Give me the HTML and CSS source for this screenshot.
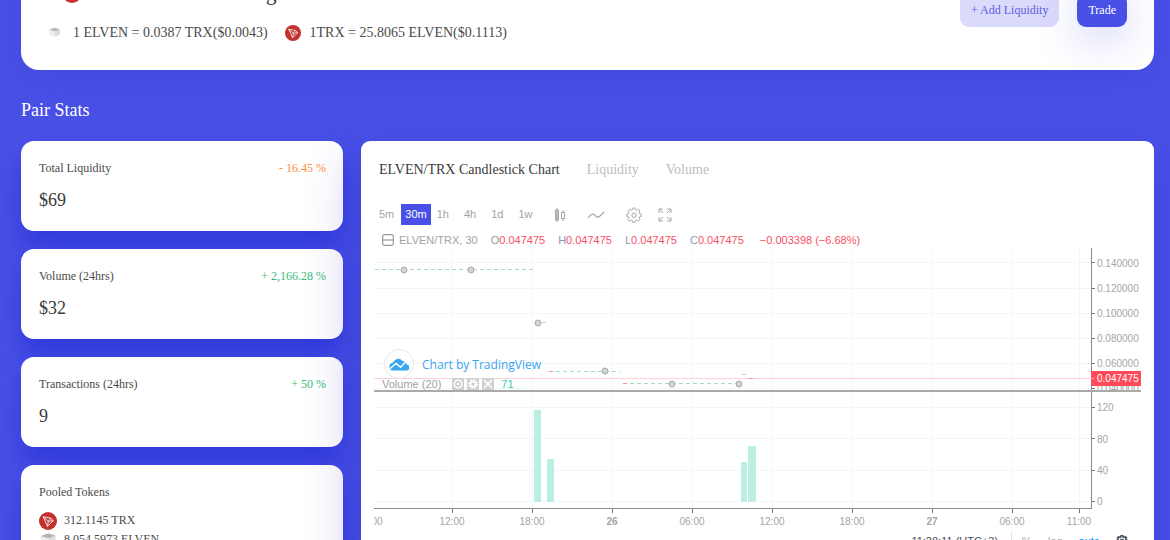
FILE: index.html
```html
<!DOCTYPE html>
<html lang="en">
<head>
<meta charset="utf-8">
<title>ELVEN/TRX Pair</title>
<link rel="stylesheet" href="styles.css">
</head>
<body>
<svg class="defs" aria-hidden="true">
  <symbol id="trx" viewBox="0 0 32 32">
    <circle cx="16" cy="16" r="16" fill="#c4302e"/>
    <path d="M7.5 8.5 21 11l4.500 4.300L15.200 25.500ZM7.500 8.500l9 8.200L15.200 25.500M21 11l-4.500 5.700 9-1.400" fill="none" stroke="#fff" stroke-width="1.500" stroke-linejoin="round"/>
  </symbol>
  <symbol id="elven" viewBox="0 0 24 24">
    <path d="M2 7 12 3l10 3-9 4Z" fill="#b5b5b5"/>
    <path d="M2 7l11 3v10L3 17Z" fill="#ececec"/>
    <path d="M13 10l9-4v9l-9 5Z" fill="#dcdcdc"/>
  </symbol>
  <symbol id="gear" viewBox="0 0 16 16">
    <path d="M6.800 1h2.400l.4 1.800 1.200.5 1.600-1 1.600 1.600-1 1.600.5 1.200 1.700.4v2.200l-1.700.4-.5 1.200 1 1.600-1.600 1.600-1.600-1-1.200.5-.4 1.700H6.800l-.4-1.700-1.200-.5-1.600 1L2 12.500l1-1.600-.5-1.200L.8 9.300V7.100l1.700-.4.5-1.200-1-1.600 1.600-1.600 1.600 1 1.200-.5Z"/>
    <circle cx="8" cy="8.200" r="2.200"/>
  </symbol>
</svg>

<main class="page">
  <header class="pair-card">
    <div class="pair-info">
      <div class="pair-title">
        <svg class="pair-coin"><use href="#elven"/></svg><svg class="pair-coin front"><use href="#trx"/></svg>
        <h1>ELVEN-TRX Trading</h1>
      </div>
      <div class="rates">
        <span class="rate"><svg class="cube"><use href="#elven"/></svg>1 ELVEN = 0.0387 TRX($0.0043)</span>
        <span class="rate"><svg class="coin"><use href="#trx"/></svg>1TRX = 25.8065 ELVEN($0.1113)</span>
      </div>
    </div>
    <div class="actions">
      <button class="btn btn-soft" type="button">+ Add Liquidity</button>
      <button class="btn btn-solid" type="button">Trade</button>
    </div>
  </header>

  <h2 class="section-title">Pair Stats</h2>

  <div class="columns">
    <div class="stats">
      <section class="stat">
        <div class="stat-head"><h3>Total Liquidity</h3><span class="down">- 16.45 %</span></div>
        <p class="value">$69</p>
      </section>
      <section class="stat">
        <div class="stat-head"><h3>Volume (24hrs)</h3><span class="up">+ 2,166.28 %</span></div>
        <p class="value">$32</p>
      </section>
      <section class="stat">
        <div class="stat-head"><h3>Transactions (24hrs)</h3><span class="up">+ 50 %</span></div>
        <p class="value">9</p>
      </section>
      <section class="stat">
        <div class="stat-head"><h3>Pooled Tokens</h3></div>
        <ul class="pool">
          <li><svg class="token"><use href="#trx"/></svg>312.1145 TRX</li>
          <li><svg class="token"><use href="#elven"/></svg>8,054.5973 ELVEN</li>
        </ul>
      </section>
    </div>

    <section class="chart-card">
      <nav class="tabs">
        <button class="tab active" type="button">ELVEN/TRX Candlestick Chart</button>
        <button class="tab" type="button">Liquidity</button>
        <button class="tab" type="button">Volume</button>
      </nav>

      <div class="toolbar">
        <div class="intervals">
          <button type="button">5m</button>
          <button type="button" class="active">30m</button>
          <button type="button">1h</button>
          <button type="button">4h</button>
          <button type="button">1d</button>
          <button type="button">1w</button>
        </div>
        <div class="tools">
          <button type="button" aria-label="Candles"><svg width="12" height="16" viewBox="0 0 12 16"><path d="M3 1v14M9 3v2.500M9 11.500V14" stroke="#a8a8a8"/><rect x="1.500" y="3" width="3" height="10" fill="#bbb" stroke="#a8a8a8"/><rect x="7.500" y="5.500" width="3" height="6" fill="none" stroke="#a8a8a8"/></svg></button>
          <button type="button" aria-label="Indicators"><svg width="18" height="16" viewBox="0 0 18 16"><path d="M1 11c3-4 4.500-5 6.500-3s3.500 3 5 1.500L17 5" fill="none" stroke="#a8a8a8" stroke-width="1.200"/></svg></button>
          <button type="button" aria-label="Settings"><svg class="outline" width="16" height="16"><use href="#gear"/></svg></button>
          <button type="button" aria-label="Full screen"><svg width="14" height="14" viewBox="0 0 14 14"><path d="M1 5V1h4M1 1l4 4M9 1h4v4M13 1 9 5M1 9v4h4M1 13l4-4M13 9v4H9M13 13 9 9" fill="none" stroke="#a8a8a8"/></svg></button>
        </div>
      </div>

      <div class="legend">
        <button type="button" aria-label="Collapse" class="collapse"><svg width="12" height="12" viewBox="0 0 12 12"><rect x=".7" y=".7" width="10.600" height="10.600" rx="1.500" fill="none" stroke="#999" stroke-width="1.200"/><path d="M1 6h10" stroke="#999" stroke-width="1.200"/></svg></button>
        <span class="symbol">ELVEN/TRX, 30</span>
        <span class="ohlc"><i>O</i>0.047475</span>
        <span class="ohlc"><i>H</i>0.047475</span>
        <span class="ohlc"><i>L</i>0.047475</span>
        <span class="ohlc"><i>C</i>0.047475</span>
        <span class="change">−0.003398 (−6.68%)</span>
      </div>

      <div class="plot">
        <svg class="plot-svg" viewBox="0 0 767 284">
          <g class="grid">
            <path d="M78.500 0V260M158.500 0V260M238.500 0V260M318.500 0V260M398.500 0V260M478.500 0V260M558.500 0V260M638.500 0V260M705.500 0V260"/>
            <path d="M0 14.500H717M0 40.500H717M0 65.500H717M0 90.500H717M0 115.500H717M0 140.500H717M0 159.500H717M0 190.500H717M0 222.500H717M0 253.500H717"/>
          </g>
          <path class="last" d="M0 130.500H717"/>
          <g class="candles">
            <path d="M1 21.500H159M168 74.500H173M182 123.500H246M256 135.500H362M368 126.500H373"/>
            <path class="fall" d="M175 123.500H179M249 135.500H253M375 130.500H379"/>
          </g>
          <g class="marks">
            <circle cx="30" cy="22" r="3"/><circle cx="97" cy="22" r="3"/><circle cx="164" cy="75" r="3"/>
            <circle cx="231" cy="123" r="3"/><circle cx="298" cy="136" r="3"/><circle cx="365" cy="136" r="3"/>
          </g>
          <g class="bars">
            <rect x="160" y="162" width="7" height="92"/><rect x="173" y="211" width="7" height="43"/>
            <rect x="367" y="214" width="6" height="40"/><rect x="374" y="198" width="8" height="56"/>
          </g>
          <g class="labels">
            <text x="723" y="19">0.140000</text><text x="723" y="44">0.120000</text><text x="723" y="69">0.100000</text>
            <text x="723" y="94">0.080000</text><text x="723" y="119">0.060000</text><text x="723" y="144">0.040000</text>
            <text x="723" y="163">120</text><text x="723" y="195">80</text><text x="723" y="226">40</text><text x="723" y="257">0</text>
          </g>
          <rect x="718" y="144" width="49" height="6" fill="#fff"/>
          <g class="labels mid">
            <text x="3" y="277">00</text><text x="78" y="277">12:00</text><text x="158" y="277">18:00</text>
            <text x="238" y="277" class="day">26</text><text x="318" y="277">06:00</text><text x="398" y="277">12:00</text>
            <text x="478" y="277">18:00</text><text x="558" y="277" class="day">27</text><text x="638" y="277">06:00</text><text x="705" y="277">11:00</text>
          </g>
          <path class="ticks" d="M717 14.500h4M717 40.500h4M717 65.500h4M717 90.500h4M717 115.500h4M717 140.500h4M717 159.500h4M717 190.500h4M717 222.500h4M717 253.500h4M78.500 261v4M158.500 261v4M238.500 261v4M318.500 261v4M398.500 261v4M478.500 261v4M558.500 261v4M638.500 261v4M705.500 261v4"/>
          <path class="axis" d="M717.500 0V261M0 260.500H718"/>
          <path class="divider" d="M0 143H767"/>
          <rect x="717" y="123" width="50" height="15" fill="#ff4a5a"/>
          <path d="M717 130.500h3" stroke="#ff9aa3"/>
          <text class="price" x="723" y="134">0.047475</text>
        </svg>
        <div class="overlay">
          <a class="brand" href="#">
            <span class="brand-mark"><svg width="20" height="13" viewBox="0 0 20 13"><path d="M3.500 12.500H17a3 3 0 0 0 .8-6A5 5 0 0 0 13.500 3 5.500 5.500 0 0 0 4 4.500 4 4 0 0 0 .5 9.500a3 3 0 0 0 3 3Z" fill="#37a6ef"/><path d="M0 11.500 7 5.500l4.500 3.800L16.500 4" fill="none" stroke="#fff" stroke-width="1.500"/></svg></span>
            Chart by TradingView
          </a>
          <div class="study">
            <span>Volume (20)</span>
            <span class="study-buttons">
              <button type="button" aria-label="Hide"><svg width="12" height="12" viewBox="0 0 12 12"><circle cx="6" cy="6" r="3.800" fill="none" stroke="#fff" stroke-width="1.500"/><circle cx="6" cy="6" r="1.200" fill="#fff"/></svg></button>
              <button type="button" aria-label="Format"><svg width="12" height="12" viewBox="0 0 12 12"><circle cx="6" cy="6" r="4" fill="none" stroke="#fff" stroke-width="2" stroke-dasharray="1.600 1.540"/><circle cx="6" cy="6" r="2.600" fill="none" stroke="#fff" stroke-width="1.800"/></svg></button>
              <button type="button" aria-label="Delete"><svg width="12" height="12" viewBox="0 0 12 12"><path d="m2 2 8 8M10 2l-8 8" stroke="#fff" stroke-width="1.600"/></svg></button>
            </span>
            <span class="study-value">71</span>
          </div>
        </div>
      </div>

      <footer class="chart-foot">
        <span class="clock">11:28:11 (UTC+3)</span>
        <span class="scale">
          <button type="button">%</button>
          <button type="button">log</button>
          <button type="button" class="auto">auto</button>
          <button type="button" aria-label="Scale settings"><svg class="dark" width="12" height="12"><use href="#gear"/></svg></button>
        </span>
      </footer>
    </section>
  </div>
</main>
</body>
</html>
```
FILE: styles.css
```css
* { box-sizing: border-box; }

body {
  margin: 0;
  height: 100vh;
  overflow: hidden;
  background: #4950e6;
  color: #4a4a4a;
  font-family: "Liberation Serif", "Times New Roman", serif;
  font-size: 12px;
}

h1, h2, h3, p, ul { margin: 0; padding: 0; font-weight: 400; }
ul { list-style: none; }
svg { display: block; flex: none; }
button {
  margin: 0;
  padding: 0;
  border: 0;
  background: none;
  font: inherit;
  color: inherit;
  cursor: pointer;
}
.defs { position: absolute; width: 0; height: 0; }

.page {
  margin-top: -49px;
  padding: 0 16px 0 21px;
  display: flow-root;
}

.pair-card {
  display: flex;
  justify-content: space-between;
  align-items: center;
  padding: 24px 27px;
  border-radius: 18px;
  background: #fff;
  box-shadow: 0 12px 32px rgba(54, 62, 205, 0.3);
}
.pair-info { display: flex; flex-direction: column; gap: 8px; }
.pair-title { display: flex; align-items: center; height: 36px; }
.pair-title h1 { margin-left: 8px; font-size: 21px; line-height: 36px; color: #333; }
.pair-coin { width: 20px; height: 20px; }
.pair-coin.front { margin-left: -6px; }
.coin { width: 16px; height: 16px; }
.cube { width: 13px; height: 13px; }
.rates { display: flex; gap: 17px; height: 27px; font-size: 14px; }
.rate { display: flex; align-items: center; gap: 9px; }
.rate .cube { margin-right: 3px; }

.actions { display: flex; gap: 18px; }
.btn { height: 33px; padding: 0 11px; border-radius: 9px; font-size: 12px; }
.btn-soft { background: #dadbfa; color: #5a60e2; }
.btn-solid { background: #4950e6; color: #fff; box-shadow: 0 9px 44px rgba(73, 80, 230, 0.3); }

.section-title { margin: 28px 0 19px; font-size: 18px; line-height: 24px; color: #fff; }

.columns { display: grid; grid-template-columns: 322px minmax(0, 1fr); gap: 18px; }
.stats { display: grid; gap: 18px; align-content: start; }
.stat {
  padding: 18px 17px 17px 18px;
  border-radius: 13px;
  background: #fff;
  box-shadow: 0 16px 26px rgba(43, 51, 214, 0.8);
}
.stat-head { display: flex; justify-content: space-between; line-height: 18px; }
.stat h3 { font-size: 12px; }
.down { color: #ff8f3a; }
.up { color: #36bd78; }
.value { margin-top: 9px; font-size: 18px; line-height: 28px; color: #3a3a3a; }
.pool { margin-top: 10px; }
.pool li { display: flex; align-items: center; gap: 7px; height: 19px; }
.token { width: 18px; height: 18px; }

.chart-card {
  padding: 17px 13px;
  border-radius: 9px;
  background: #fff;
  box-shadow: 0 20px 52px rgba(43, 51, 205, 0.4);
  font-family: "Liberation Sans", Arial, sans-serif;
  font-size: 11px;
  color: #a3a3a3;
}
.tabs {
  display: flex;
  gap: 27px;
  padding-left: 5px;
  font-family: "Liberation Serif", "Times New Roman", serif;
  font-size: 14px;
  line-height: 24px;
}
.tab { color: #bdbdbd; }
.tab.active { color: #3a3a3a; }

.toolbar { display: flex; align-items: center; gap: 14px; height: 21px; margin-top: 22px; }
.intervals { display: flex; height: 21px; }
.intervals button { padding: 0 7px 1px 8px; }
.intervals button:first-child { padding-left: 5px; }
.intervals .active { padding: 0 4px 1px; background: #4950e6; color: #fff; }
.intervals .active + button { padding-left: 6px; }
.tools { display: flex; align-items: center; gap: 21px; }
.tools button:nth-child(4) { margin-left: -5px; }
.outline { fill: none; stroke: #a8a8a8; }
.dark { fill: none; stroke: #4a4f5c; stroke-width: 2px; }

.legend { display: flex; align-items: center; height: 16px; margin-top: 7px; padding-left: 8px; line-height: 16px; }
.symbol { margin-left: 5px; }
.ohlc { display: flex; margin-left: 13px; color: #f8505f; }
.ohlc i { font-style: normal; color: #8f97b5; }
.change { margin-left: 16px; color: #f8505f; }

.plot { position: relative; }
.plot-svg { width: 100%; height: auto; }
.grid { stroke: #eff7fb; }
.candles { fill: none; stroke: #a6dcc6; stroke-dasharray: 4 3; }
.candles .fall { stroke: #ff8d97; stroke-dasharray: none; }
.marks { fill: #d3d3d3; stroke: #aaa; }
.bars { fill: #bceee4; }
.last { stroke: #ffd0d4; }
.labels { font-size: 10px; fill: #a5a5a5; }
.mid { text-anchor: middle; }
.day { font-weight: 700; }
.ticks { stroke: #777; }
.axis { fill: none; stroke: #8c8c8c; stroke-width: 1px; }
.divider { stroke: #aaa; stroke-width: 2px; }
.price { font-size: 10px; fill: #fff; }

.overlay { position: absolute; left: 8px; top: 101px; }
.brand {
  display: flex;
  align-items: center;
  gap: 8px;
  margin-left: 2px;
  color: #37a6ef;
  font: 12px "Open Sans", sans-serif;
  text-decoration: none;
}
.brand-mark {
  display: grid;
  place-items: center;
  width: 30px;
  height: 30px;
  border: 1px solid #e8e8e8;
  border-radius: 50%;
  background: #fff;
}
.study { display: flex; align-items: center; height: 10px; }
.study-buttons { display: flex; gap: 3px; margin: 0 7px 0 11px; }
.study-buttons button { background: #d0d0d0; }
.study-value { color: #35cdb0; }

.chart-foot {
  display: flex;
  justify-content: flex-end;
  height: 18px;
  padding-right: 13px;
  line-height: 18px;
  color: #4a4f5c;
}
.scale {
  display: flex;
  align-items: center;
  gap: 16px;
  margin-left: 13px;
  padding-left: 10px;
  border-left: 1px solid #e3e3e3;
  color: #aaa;
}
.scale .auto { color: #2196f3; }
```
